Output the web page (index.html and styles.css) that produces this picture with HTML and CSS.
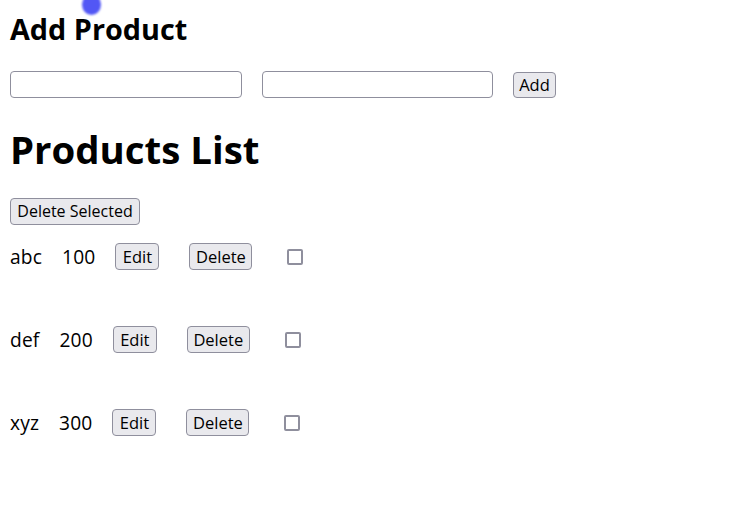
FILE: index.html
```html
<!DOCTYPE html>
<html>
<head>
<meta charset="utf-8">
<link rel="stylesheet" href="styles.css">
</head>
<body>
<div class="dot"></div>
<h2 class="title">Add Product</h2>
<form class="add-form">
  <input class="field" type="text">
  <input class="field" type="text">
  <button class="btn add" type="button">Add</button>
</form>
<h1 class="list-title">Products List</h1>
<div class="toolbar"><button class="btn bulk" type="button">Delete Selected</button></div>
<div class="products">
  <div class="row">
    <span class="name">abc</span>
    <span class="price">100</span>
    <button class="btn edit" type="button">Edit</button>
    <button class="btn del" type="button">Delete</button>
    <input class="check" type="checkbox">
  </div>
  <div class="row">
    <span class="name">def</span>
    <span class="price">200</span>
    <button class="btn edit" type="button">Edit</button>
    <button class="btn del" type="button">Delete</button>
    <input class="check" type="checkbox">
  </div>
  <div class="row">
    <span class="name">xyz</span>
    <span class="price">300</span>
    <button class="btn edit" type="button">Edit</button>
    <button class="btn del" type="button">Delete</button>
    <input class="check" type="checkbox">
  </div>
</div>
</body>
</html>
```

FILE: styles.css
```css
html, body {
  margin: 0;
  background: #fff;
}
body {
  padding: 10px;
  font-family: "Open Sans", "Noto Sans", sans-serif;
  font-size: 19.2px;
  color: #000;
  position: relative;
}
.dot {
  position: absolute;
  left: 82px;
  top: -6px;
  width: 19px;
  height: 21px;
  border-radius: 50%;
  background: #5257f5;
  filter: blur(0.8px);
}
.title {
  margin: 0;
  padding-top: 2px;
  font-size: 28.8px;
  font-weight: 700;
  line-height: 33px;
}
.add-form {
  margin: 26px 0 0;
  display: flex;
  align-items: center;
  height: 27px;
}
.field {
  box-sizing: border-box;
  width: 232px;
  height: 27px;
  margin: 0 20px 0 0;
  border: 1px solid #8f8f9d;
  border-radius: 4px;
  background: #fff;
  padding: 0 4px;
  font: inherit;
  font-size: 16px;
}
.field:nth-child(2) {
  width: 231px;
}
.btn {
  box-sizing: border-box;
  height: 27px;
  margin: 0;
  padding: 0;
  border: 1px solid #8f8f9d;
  border-radius: 4px;
  background: #e9e9ed;
  color: #000;
  font-family: "Open Sans", "Noto Sans", sans-serif;
  font-size: 16.5px;
  line-height: 25px;
  text-align: center;
}
.add {
  width: 43px;
  height: 26px;
  line-height: 24px;
}
.bulk {
  width: 130px;
  font-size: 16px;
}
.list-title {
  margin: 29px 0 0;
  font-size: 38.4px;
  font-weight: 700;
  line-height: 44px;
}
.toolbar {
  margin-top: 27px;
  height: 27px;
  display: flex;
  align-items: flex-start;
}
.products {
  margin-top: 18px;
}
.row {
  display: flex;
  align-items: center;
  height: 27px;
  margin-bottom: 56px;
}
.name,
.price {
  margin-right: 20px;
  line-height: 26px;
  letter-spacing: 0.15px;
}
.edit {
  width: 44px;
  margin-right: 30px;
}
.del {
  width: 63px;
  margin-right: 35px;
}
.check {
  appearance: none;
  -webkit-appearance: none;
  box-sizing: border-box;
  width: 16px;
  height: 16px;
  margin: 1px 0 0;
  border: 2px solid #8f8f9d;
  border-radius: 2px;
  background: #fff;
}
```
